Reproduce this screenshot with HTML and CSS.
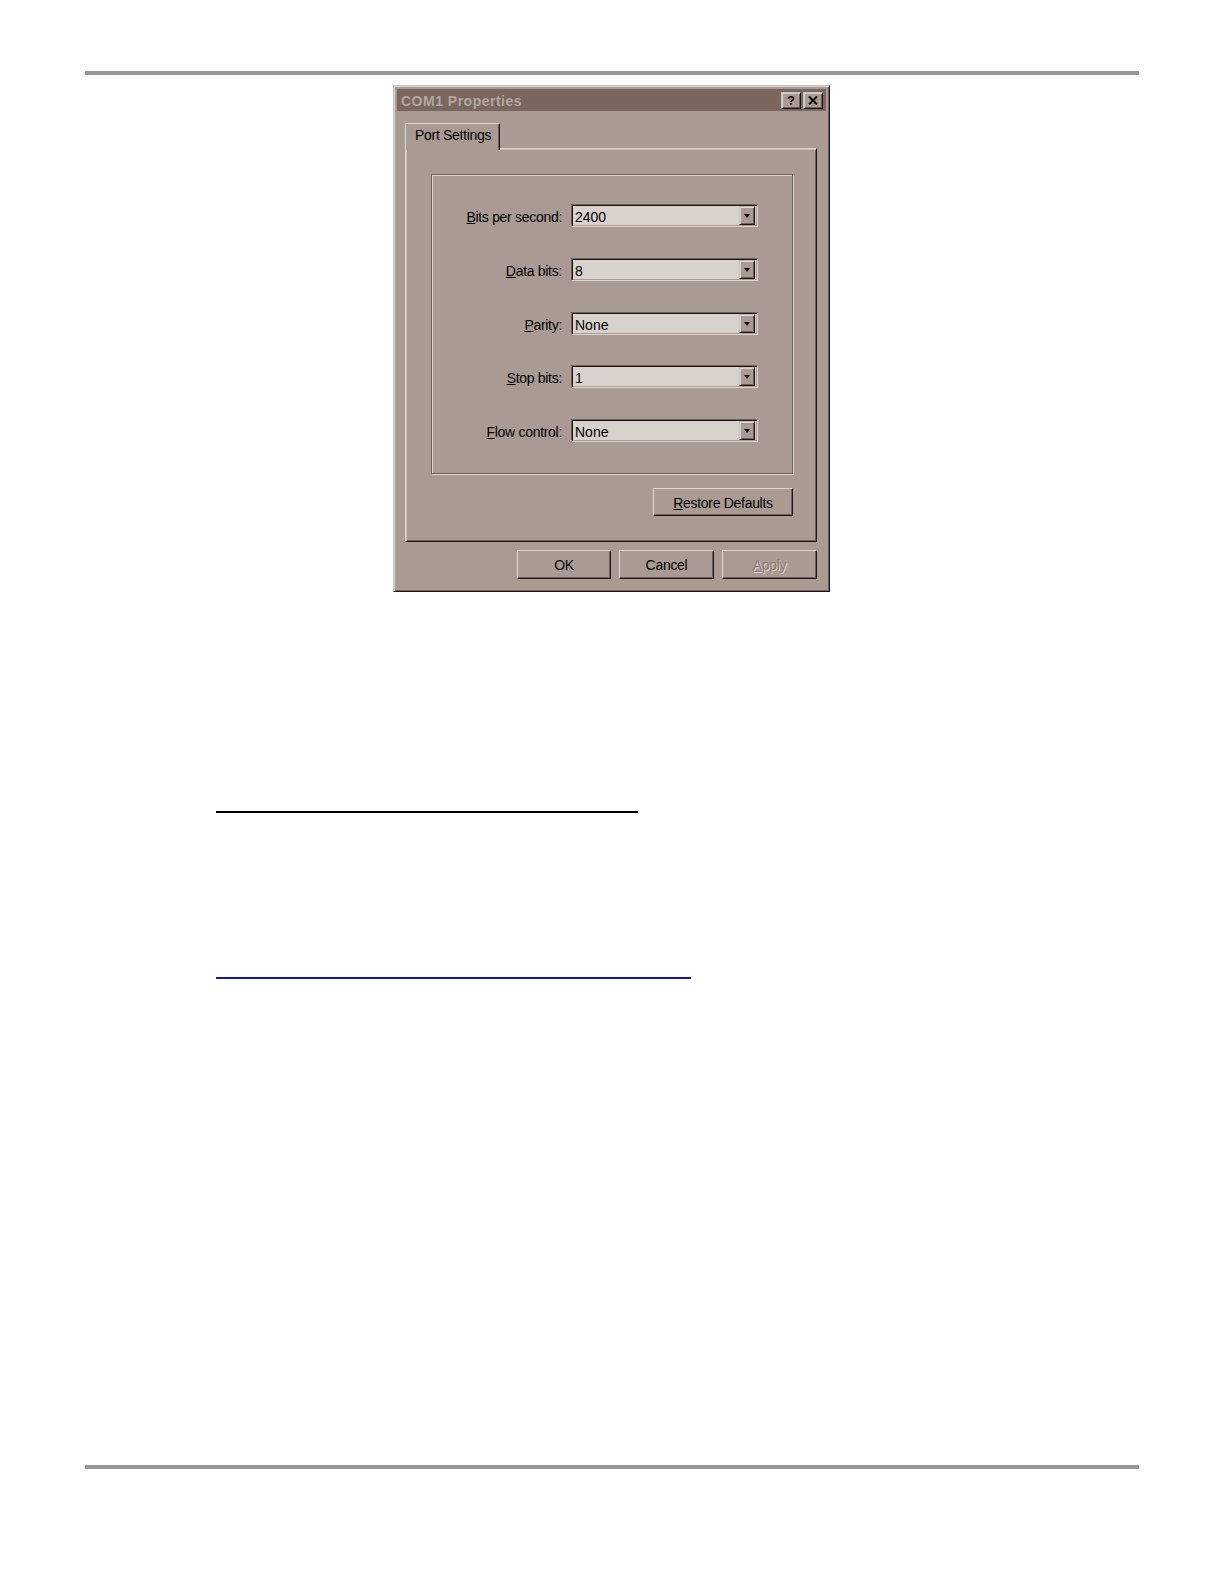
FILE: index.html
```html
<!DOCTYPE html>
<html>
<head>
<meta charset="utf-8">
<title>COM1 Properties</title>
<link rel="stylesheet" href="styles.css">
</head>
<body>
<div class="page">
  <div class="rule rule-top"></div>

  <div class="dialog">
    <div class="titlebar">
      <span class="title">COM1 Properties</span>
      <div class="tbtns">
        <span class="tbtn help">?</span>
        <span class="tbtn close"><svg width="10" height="9" viewBox="0 0 10 9"><path d="M1 0.5 L9 8.5 M9 0.5 L1 8.5" stroke="#000" stroke-width="2" fill="none"/></svg></span>
      </div>
    </div>

    <div class="dlg-body">
      <div class="tabs">
        <div class="tab">Port Settings</div>
      </div>
      <div class="panel">
        <div class="group">
          <div class="label"><u>B</u>its per second:</div>
          <div class="combo"><span class="val">2400</span><span class="arrow"><span class="tri"></span></span></div>

          <div class="label"><u>D</u>ata bits:</div>
          <div class="combo"><span class="val">8</span><span class="arrow"><span class="tri"></span></span></div>

          <div class="label"><u>P</u>arity:</div>
          <div class="combo"><span class="val">None</span><span class="arrow"><span class="tri"></span></span></div>

          <div class="label"><u>S</u>top bits:</div>
          <div class="combo"><span class="val">1</span><span class="arrow"><span class="tri"></span></span></div>

          <div class="label"><u>F</u>low control:</div>
          <div class="combo"><span class="val">None</span><span class="arrow"><span class="tri"></span></span></div>
        </div>
        <div class="restore-row">
          <div class="btn btn-restore"><span><u>R</u>estore Defaults</span></div>
        </div>
      </div>
      <div class="actions">
        <div class="btn btn-ok">OK</div>
        <div class="btn btn-cancel">Cancel</div>
        <div class="btn btn-apply disabled"><u>A</u>pply</div>
      </div>
    </div>
  </div>

  <div class="line line-black"></div>
  <div class="line line-blue"></div>

  <div class="rule rule-bottom"></div>
</div>
</body>
</html>
```

FILE: styles.css
```css
* { box-sizing: border-box; }

html, body {
  margin: 0;
  padding: 0;
  background: #ffffff;
}

body {
  font-family: "Liberation Sans", Arial, sans-serif;
  font-size: 14px;
  letter-spacing: -0.3px;
  color: #000;
}

.page {
  width: 1224px;
  height: 1584px;
  overflow: hidden;
  padding-top: 71px;
}

.rule {
  margin-left: 85px;
  width: 1054px;
  height: 4px;
  background: #969696;
}

/* ---------- dialog ---------- */
.dialog {
  margin-top: 10px;
  margin-left: 393px;
  width: 437px;
  height: 507px;
  background: #a99b93;
  border: 1px solid;
  border-color: #c9bfb9 #1c1414 #1c1414 #c9bfb9;
  box-shadow: inset 1px 1px 0 #ddd5d0, inset -1px -1px 0 #6e615b;
  padding: 3px;
}

.titlebar {
  height: 22px;
  background: #7b6760;
  display: flex;
  align-items: center;
  justify-content: space-between;
  padding: 0 3px 0 4px;
}

.title {
  color: #b2a69e;
  font-weight: bold;
  font-size: 14px;
  letter-spacing: 0.5px;
  padding-top: 1px;
}

.tbtns {
  display: flex;
  gap: 2px;
}

.tbtn {
  width: 20px;
  height: 17px;
  background: #a99b93;
  border: 1px solid;
  border-color: #c9bfb9 #1c1414 #1c1414 #c9bfb9;
  box-shadow: inset 1px 1px 0 #ddd5d0, inset -1px -1px 0 #6e615b;
  display: flex;
  align-items: center;
  justify-content: center;
  font-weight: bold;
  font-size: 13px;
  letter-spacing: 0;
  line-height: 1;
}

.dlg-body {
  padding: 12px 9px 9px 8px;
}

.tabs {
  display: flex;
  height: 25px;
}

.tab {
  position: relative;
  z-index: 1;
  width: 95px;
  height: 27px;
  background: #a99b93;
  border-top: 1px solid #ddd5d0;
  border-left: 1px solid #ddd5d0;
  border-right: 1px solid #1c1414;
  border-radius: 2px 2px 0 0;
  box-shadow: inset -1px 0 0 #6e615b;
  padding: 3px 0 0 9px;
}

.panel {
  height: 394px;
  border: 1px solid;
  border-color: #ddd5d0 #1c1414 #1c1414 #ddd5d0;
  box-shadow: inset 1px 1px 0 #c9bfb9, inset -1px -1px 0 #6e615b;
  padding: 25px 23px 0 25px;
}

.group {
  height: 300px;
  border: 1px solid #6e615b;
  box-shadow: 1px 1px 0 #ddd5d0, inset 1px 1px 0 #ddd5d0;
  display: grid;
  grid-template-columns: 130px 187px;
  grid-auto-rows: 23px;
  column-gap: 9px;
  row-gap: 30.75px;
  align-items: center;
  padding: 29px 0 0 0;
}

.label {
  text-align: right;
  white-space: nowrap;
  padding-top: 3px;
}

.combo {
  height: 23px;
  background: #d9d1cc;
  border: 1px solid;
  border-color: #6e615b #ddd5d0 #ddd5d0 #6e615b;
  box-shadow: inset 1px 1px 0 #1c1414, inset -1px -1px 0 #a99b93;
  display: flex;
  align-items: center;
  justify-content: space-between;
  padding: 2px 2px 2px 3px;
}

.val {
  padding-top: 3px;
  letter-spacing: 0;
}

.arrow {
  width: 16px;
  height: 19px;
  background: #a99b93;
  border: 1px solid;
  border-color: #c9bfb9 #1c1414 #1c1414 #c9bfb9;
  box-shadow: inset 1px 1px 0 #ddd5d0, inset -1px -1px 0 #6e615b;
  display: flex;
  align-items: center;
  justify-content: center;
}

.tri {
  width: 0;
  height: 0;
  border-left: 3.5px solid transparent;
  border-right: 3.5px solid transparent;
  border-top: 4px solid #000;
  margin-top: 1px;
}

.restore-row {
  display: flex;
  justify-content: flex-end;
  margin-top: 14px;
}

.btn {
  height: 29px;
  background: #a99b93;
  border: 1px solid;
  border-color: #ddd5d0 #1c1414 #1c1414 #ddd5d0;
  box-shadow: inset -1px -1px 0 #6e615b;
  display: flex;
  align-items: center;
  justify-content: center;
  padding-top: 1px;
}

.btn-restore {
  width: 140px;
  height: 28px;
}

.actions {
  display: flex;
  justify-content: flex-end;
  gap: 8px;
  margin-top: 8px;
}

.btn-ok { width: 94px; }
.btn-cancel { width: 95px; }
.btn-apply { width: 95px; }

.disabled {
  color: #8a7d77;
  text-shadow: 1px 1px 0 #ddd5d0;
}

/* ---------- page lines ---------- */
.line {
  margin-left: 216px;
  height: 2px;
}

.line-black {
  margin-top: 219px;
  width: 422px;
  background: #000;
}

.line-blue {
  margin-top: 164px;
  width: 475px;
  background: #1414a0;
}

.rule-bottom {
  margin-top: 486px;
}
```
